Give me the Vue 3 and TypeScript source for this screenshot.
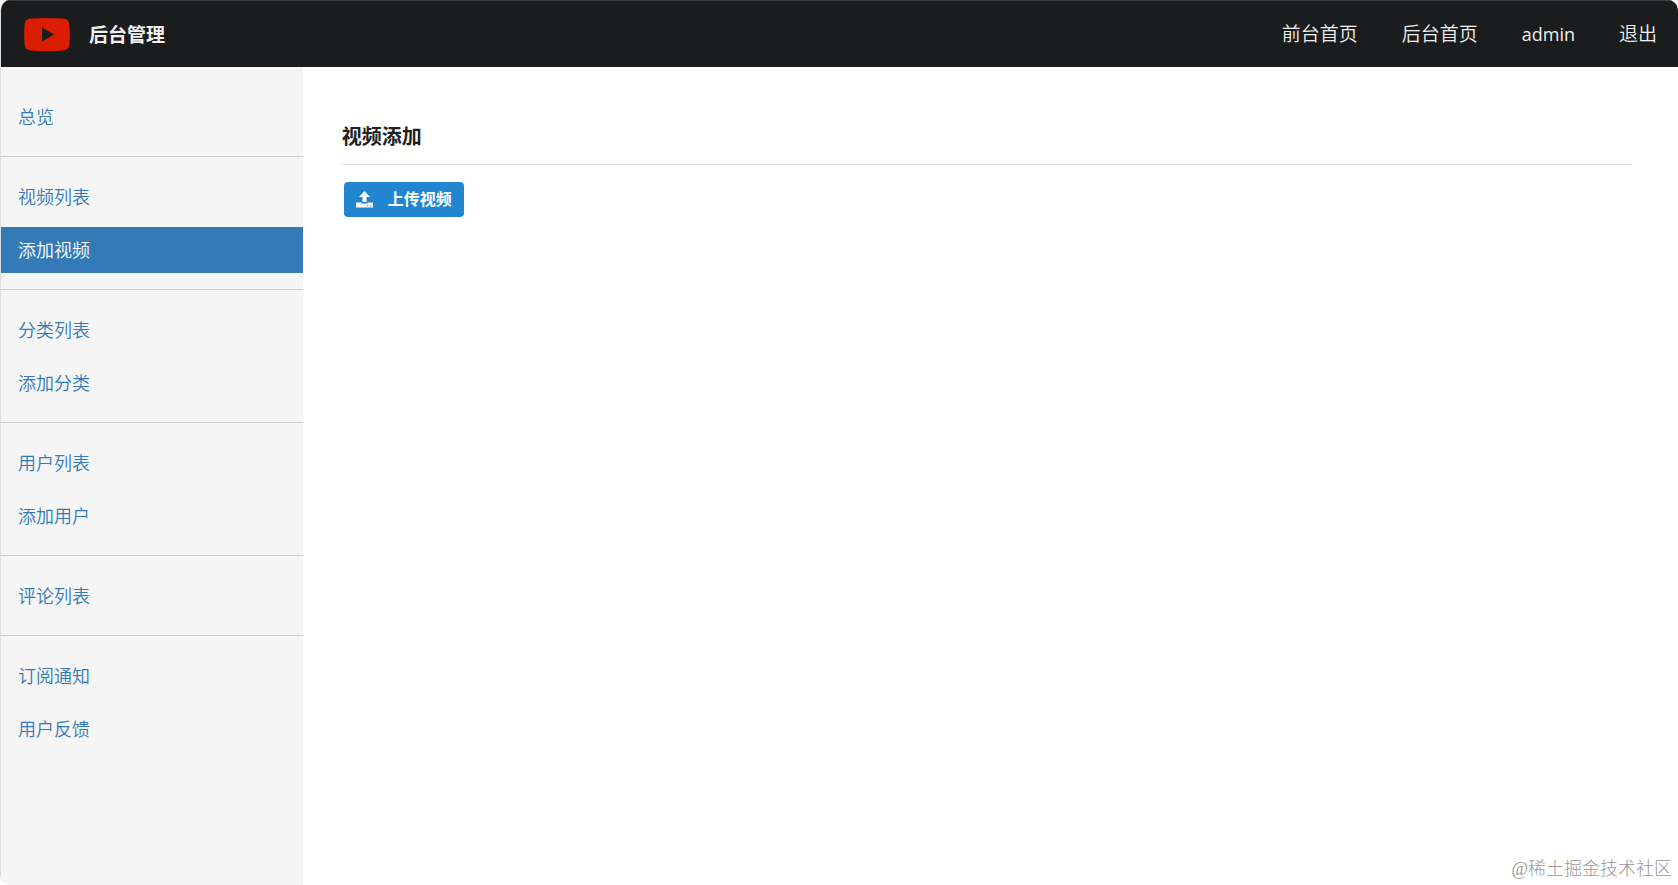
<script setup lang="ts">
interface MenuItem {
  label: string
  active?: boolean
}

interface TopLink {
  label: string
  user?: boolean
}

const topLinks: TopLink[] = [
  { label: '前台首页' },
  { label: '后台首页' },
  { label: 'admin', user: true },
  { label: '退出' },
]

const menuGroups: MenuItem[][] = [
  [{ label: '总览' }],
  [{ label: '视频列表' }, { label: '添加视频', active: true }],
  [{ label: '分类列表' }, { label: '添加分类' }],
  [{ label: '用户列表' }, { label: '添加用户' }],
  [{ label: '评论列表' }],
  [{ label: '订阅通知' }, { label: '用户反馈' }],
]
</script>

<template>
  <div class="app">
    <header class="topbar">
      <a class="brand" href="#">
        <svg class="logo" viewBox="0 0 46 33" aria-hidden="true">
          <path
            fill="#dc1e00"
            fill-rule="evenodd"
            d="M7 .6C17 -.1 29 -.1 39 .6C43.500 1 45 3 45.400 7C46 13 46 20 45.400 26C45 30 43.500 32 39 32.400C29 33.100 17 33.100 7 32.400C2.500 32 1 30 .6 26C0 20 0 13 .6 7C1 3 2.500 1 7 .6ZM18 9.500V23.500L30 16.500Z"
          />
        </svg>
        <span class="brand-name">后台管理</span>
      </a>
      <nav class="top-nav">
        <a v-for="link in topLinks" :key="link.label" href="#" :class="{ user: link.user }">{{ link.label }}</a>
      </nav>
    </header>

    <div class="body">
      <nav class="sidebar">
        <ul v-for="(group, index) in menuGroups" :key="index" class="group">
          <li v-for="item in group" :key="item.label">
            <a
              href="#"
              class="item"
              :class="{ active: item.active }"
              :aria-current="item.active ? 'page' : undefined"
            >{{ item.label }}</a>
          </li>
        </ul>
      </nav>

      <main class="content">
        <h1 class="title">视频添加</h1>
        <button type="button" class="upload">
          <svg class="upload-icon" viewBox="0 0 17 17" aria-hidden="true">
            <path
              fill="#fff"
              fill-rule="evenodd"
              d="M8.500 0L14 6H10.500V11H6.500V6H3ZM0 11.500H5.500V12.500H11.500V11.500H17V16.500H0ZM11 14.200V15.200H12.200V14.200ZM13.800 14.200V15.200H15V14.200Z"
            />
          </svg>
          <span>上传视频</span>
        </button>
      </main>
    </div>

    <div class="watermark">@稀土掘金技术社区</div>
  </div>
</template>

<style>
body {
  margin: 0;
  background: #fff;
}
</style>

<style scoped>
.app {
  position: relative;
  box-sizing: border-box;
  display: flex;
  flex-direction: column;
  min-height: 100vh;
  overflow: hidden;
  border-left: 1px solid #dedede;
  border-radius: 10px;
  background: #fff;
  font-family: "Open Sans", "Noto Sans CJK SC", sans-serif;
}

a {
  text-decoration: none;
}

.topbar {
  box-sizing: border-box;
  display: flex;
  align-items: center;
  justify-content: space-between;
  height: 67px;
  padding: 0 21px 0 23px;
  border-top: 1px solid #3c3e3e;
  background: #1b1c1d;
  font-size: 19px;
  line-height: 28px;
}

.brand {
  display: flex;
  align-items: center;
  gap: 19px;
  color: #f0f0f0;
}

.logo {
  width: 46px;
  height: 33px;
}

.brand-name {
  padding-top: 2px;
  font-weight: 700;
}

.top-nav {
  display: flex;
  align-items: center;
  gap: 44px;
}

.top-nav a {
  color: #f0f0f0;
  font-weight: 350;
}

.top-nav .user {
  font-size: 18px;
  font-weight: 400;
}

.body {
  display: flex;
  flex: 1;
}

.sidebar {
  flex: 0 0 18%;
  box-sizing: border-box;
  padding-top: 10px;
  background: #f5f5f5;
}

.group {
  display: flex;
  flex-direction: column;
  gap: 7px;
  margin: 0;
  padding: 17px 0 16px;
  list-style: none;
}

.group + .group {
  border-top: 1px solid #cdcdcd;
}

.item {
  display: block;
  padding: 9px 17px;
  color: #337ab7;
  font-size: 18px;
  font-weight: 350;
  line-height: 28px;
}

.item.active {
  background: #337ab7;
  color: #fff;
}

.content {
  flex: 1;
  min-width: 0;
  padding: 54px 46px 40px 39px;
}

.title {
  margin: 0 0 17px;
  padding-bottom: 12px;
  border-bottom: 1px solid #dcdddd;
  color: #212121;
  font-size: 20px;
  font-weight: 700;
  line-height: 31px;
}

.upload {
  display: flex;
  align-items: center;
  gap: 15px;
  height: 35px;
  margin-left: 2px;
  padding: 0 12px 1px;
  border: 0;
  border-radius: 4px;
  background: #2185d0;
  color: #fff;
  font-family: inherit;
  font-size: 16px;
  font-weight: 700;
  line-height: 24px;
}

.upload-icon {
  width: 17px;
  height: 17px;
}

.watermark {
  position: absolute;
  right: 6px;
  bottom: 4px;
  color: #999;
  font-family: "Liberation Serif", "Noto Sans CJK SC", serif;
  font-size: 18px;
  font-weight: 300;
  line-height: 24px;
}
</style>
